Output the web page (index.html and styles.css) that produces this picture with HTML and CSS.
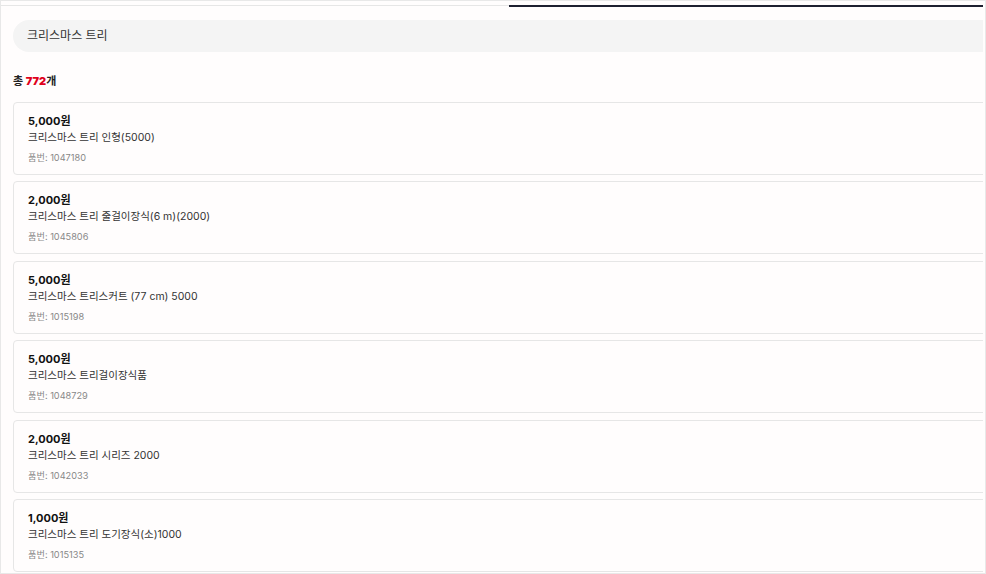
FILE: index.html
```html
<!DOCTYPE html>
<html lang="ko">
  <head>
    <meta charset="UTF-8" />
    <meta name="viewport" content="width=device-width, initial-scale=1.0" />
    <title>검색 결과</title>
    <link rel="stylesheet" href="styles.css">
  </head>
  <body>
    <div class="frame">
      <div class="tabs">
        <div class="tab"></div>
        <div class="tab active"></div>
      </div>
      <div class="content">
        <div class="search">크리스마스 트리</div>
        <p class="total">총 <strong>772</strong>개</p>
        <ul class="list">
          <li class="card">
            <div class="price">5,000원</div>
            <div class="name">크리스마스 트리 인형(5000)</div>
            <div class="code">품번: 1047180</div>
          </li>
          <li class="card">
            <div class="price">2,000원</div>
            <div class="name">크리스마스 트리 줄걸이장식(6 m)(2000)</div>
            <div class="code">품번: 1045806</div>
          </li>
          <li class="card">
            <div class="price">5,000원</div>
            <div class="name">크리스마스 트리스커트 (77 cm) 5000</div>
            <div class="code">품번: 1015198</div>
          </li>
          <li class="card">
            <div class="price">5,000원</div>
            <div class="name">크리스마스 트리걸이장식품</div>
            <div class="code">품번: 1048729</div>
          </li>
          <li class="card">
            <div class="price">2,000원</div>
            <div class="name">크리스마스 트리 시리즈 2000</div>
            <div class="code">품번: 1042033</div>
          </li>
          <li class="card">
            <div class="price">1,000원</div>
            <div class="name">크리스마스 트리 도기장식(소)1000</div>
            <div class="code">품번: 1015135</div>
          </li>
        </ul>
      </div>
    </div>
  </body>
</html>
```

FILE: styles.css
```css
body {
  margin: 0;
  background-color: #e8e8e8;
  font-family: Inter, "Noto Sans CJK KR", sans-serif;
  color: #222;
}
ul {
  margin: 0;
  padding: 0;
  list-style: none;
}
.frame {
  box-sizing: border-box;
  width: 984px;
  height: 572px;
  margin-top: 1px;
  margin-left: 1px;
  background-color: #fffdfd;
  overflow: hidden;
}
.tabs {
  display: flex;
  padding-top: 2px;
  margin-right: 2px;
}
.tab {
  width: 508px;
  height: 1px;
  border-bottom: 1px solid #e6e6e6;
}
.tab.active {
  flex: 1;
  height: 2px;
  border-bottom: 2px solid #1d2030;
}
.tab:first-child {
  height: 2px;
}
.content {
  padding: 13px 0 0 12px;
  margin-right: 2px;
  overflow: hidden;
}
.search {
  height: 32px;
  line-height: 32px;
  margin-right: -20px;
  padding-left: 14px;
  border-radius: 16px;
  background-color: #f4f4f4;
  font-size: 12px;
  color: #333;
}
.total {
  margin: 20px 0 14px;
  font-size: 11px;
  font-weight: 700;
  color: #222;
}
.total strong {
  color: #e0001b;
}
.list {
  display: flex;
  flex-direction: column;
  gap: 6.4px;
  margin-right: -20px;
}
.card {
  height: 73px;
  box-sizing: border-box;
  padding: 10px 14px 0;
  border: 1px solid #e6e6e6;
  border-radius: 4px;
  background-color: #fffdfd;
}
.price {
  font-size: 11px;
  font-weight: 700;
  line-height: 16px;
  color: #111;
}
.name {
  font-size: 10.5px;
  line-height: 17px;
  color: #333;
}
.code {
  margin-top: 5px;
  font-size: 9.2px;
  line-height: 14px;
  color: #888;
}
```
